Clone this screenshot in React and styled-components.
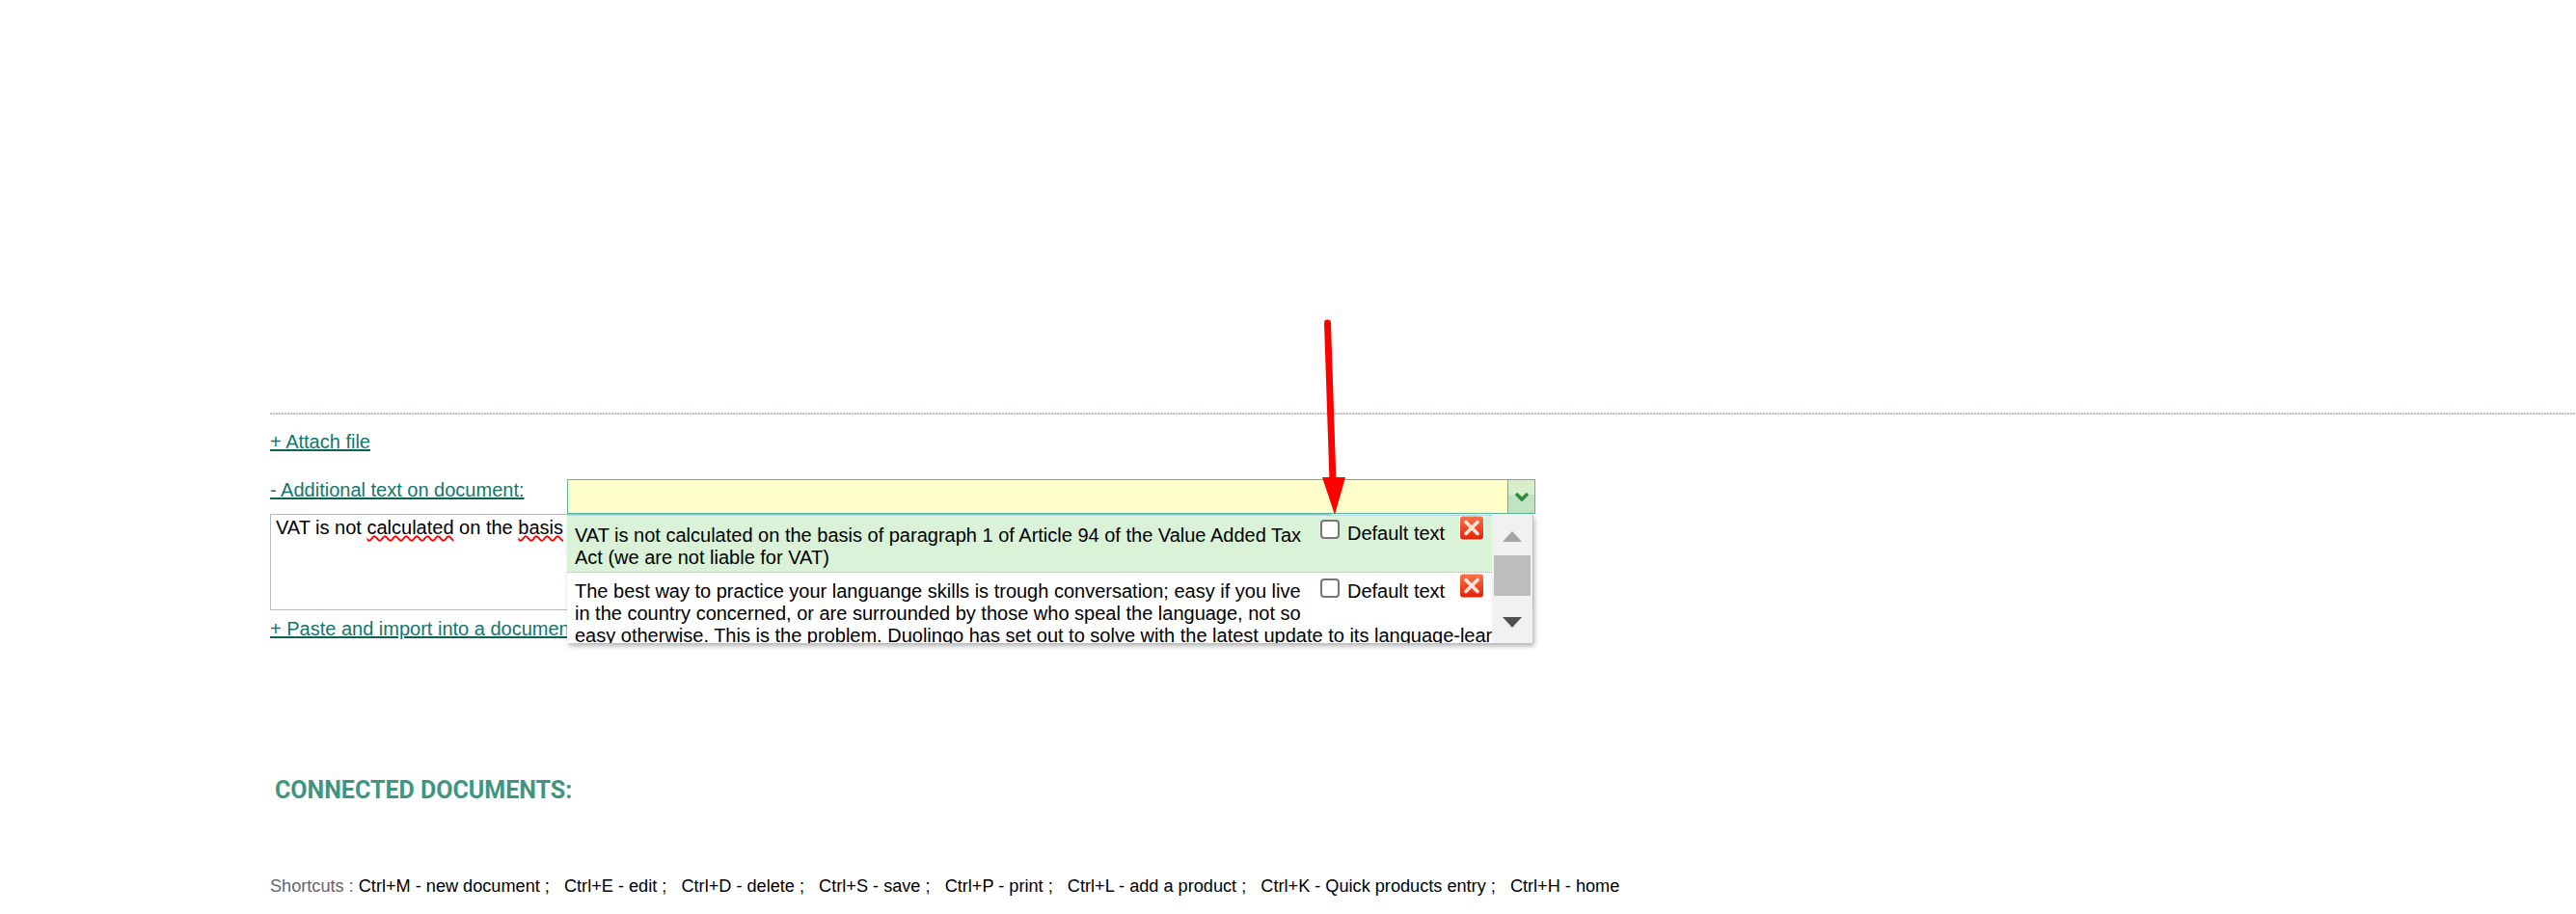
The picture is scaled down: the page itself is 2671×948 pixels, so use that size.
import React from "react";
import styled, { createGlobalStyle } from "styled-components";

const Global = createGlobalStyle`
  html, body { margin: 0; padding: 0; background: #fff; overflow: hidden; }
  body { font-family: "Liberation Sans", Arial, sans-serif; }
`;

const Page = styled.div`
  position: relative;
  width: 2671px;
  height: 948px;
  padding: 428px 0 0 280px;
  box-sizing: border-box;
  overflow: hidden;
`;

const Divider = styled.div`
  height: 2px;
  background: repeating-linear-gradient(90deg, #bcc6bd 0 2px, #eef1ee 2px 3px);
  margin-bottom: 17px;
`;

const TextLink = styled.a`
  display: block;
  width: fit-content;
  font-size: 20px;
  line-height: 23px;
  color: #16756b;
  text-decoration: underline;
  text-decoration-color: #0f5f55;
  text-decoration-thickness: 2px;
  white-space: nowrap;
`;

const AdditionalRow = styled.div`
  display: flex;
  align-items: flex-start;
  margin-top: 27px;
  height: 36px;
`;

const LabelCell = styled.div`
  width: 308px;
`;

const ComboWrap = styled.div`
  display: flex;
  width: 1004px;
  height: 36px;
  box-sizing: border-box;
  border: 1px solid #58b89a;
`;

const ComboInput = styled.div`
  flex: 1;
  background: #ffffcc;
`;

const ComboButton = styled.div`
  width: 27px;
  border-left: 1px solid #58b89a;
  background: linear-gradient(#d9efcb 0 45%, #c0e4c2 45% 100%);
  display: flex;
  align-items: center;
  justify-content: center;
`;

const TextBox = styled.div`
  width: 1100px;
  height: 100px;
  box-sizing: border-box;
  border: 1px solid #b4b8cc;
  padding: 2px 5px;
  font-size: 20px;
  line-height: 23px;
  color: #000;
  white-space: nowrap;
  overflow: hidden;
`;

const Misspelled = styled.span`
  text-decoration: underline wavy #f00 1.5px;
`;

const PasteLink = styled(TextLink)`
  margin-top: 8px;
`;

const Heading = styled.h2`
  margin: 141px 0 0 5px;
  font-family: Roboto, sans-serif;
  font-weight: 700;
  font-size: 25px;
  line-height: 29px;
  color: #3f9580;
`;

const Shortcuts = styled.div`
  margin: 75px 0 0 0;
  font-size: 18.15px;
  line-height: 21px;
  color: #000;
  white-space: pre;
`;

const ShortcutsLabel = styled.span`
  color: #666;
`;

const Dropdown = styled.div`
  position: absolute;
  left: 588px;
  top: 534px;
  width: 1001px;
  height: 133px;
  display: flex;
  background: #fff;
  box-shadow: 2px 3px 5px rgba(0, 0, 0, 0.3);
`;

const Items = styled.div`
  flex: 1;
  min-width: 0;
  overflow: hidden;
`;

const Item = styled.div`
  display: flex;
  box-sizing: border-box;
  height: ${(p) => p.$height}px;
  padding: ${(p) => (p.$active ? 9 : 8)}px 0 0 8px;
  background: ${(p) => (p.$active ? "#d9f2d8" : "#fff")};
  border-top: ${(p) => (p.$active ? "1px dotted #9dbcd0" : "none")};
  border-bottom: ${(p) => (p.$active ? "1px dotted #9dbcd0" : "none")};
`;

const ItemText = styled.div`
  width: 758px;
  flex: none;
  font-size: 20px;
  line-height: 23px;
  color: #000;
  white-space: nowrap;
`;

const DefaultCell = styled.label`
  display: flex;
  align-items: flex-start;
  flex: none;
  font-size: 20px;
  line-height: 23px;
  color: #000;
  margin: ${(p) => (p.$active ? -2 : 0)}px 0 0 15px;
  white-space: nowrap;
`;

const Check = styled.input.attrs({ type: "checkbox" })`
  appearance: none;
  width: 20px;
  height: 20px;
  margin: ${(p) => (p.$active ? -3 : -2)}px 8px 0 0;
  border: 2px solid #767676;
  border-radius: 4px;
  background: #fff;
`;

const Remove = styled.svg`
  width: 26px;
  height: 25px;
  flex: none;
  margin: ${(p) => (p.$active ? -9 : -7)}px 0 0 15px;
`;

const ScrollBar = styled.div`
  position: relative;
  width: 42px;
  flex: none;
  background: #f1f1f1;
  &::after {
    content: "";
    position: absolute;
    right: -1px;
    top: 0;
    width: 1px;
    height: 99px;
    background: #b8bccc;
  }
`;

const Thumb = styled.div`
  position: absolute;
  left: 2px;
  top: 42px;
  width: 38px;
  height: 42px;
  background: #bdbdbd;
`;

const ArrowUp = styled.div`
  position: absolute;
  left: 11px;
  top: 17px;
  border-left: 10px solid transparent;
  border-right: 10px solid transparent;
  border-bottom: 11px solid #a3a3a3;
`;

const ArrowDown = styled.div`
  position: absolute;
  left: 11px;
  top: 106px;
  border-left: 10px solid transparent;
  border-right: 10px solid transparent;
  border-top: 11px solid #505050;
`;

const Annotation = styled.svg`
  position: absolute;
  left: 1360px;
  top: 320px;
  width: 50px;
  height: 220px;
`;

const CloseIcon = ({ active }) => (
  <Remove viewBox="0 0 26 25" $active={active}>
    <defs>
      <linearGradient id="rx" x1="0" y1="0" x2="0" y2="1">
        <stop offset="0" stopColor="#f8734a" />
        <stop offset="1" stopColor="#e42208" />
      </linearGradient>
    </defs>
    <rect x="0" y="0" width="26" height="25" fill="#fff" />
    <rect x="1" y="0.5" width="24" height="24" rx="3" fill="url(#rx)" />
    <path d="M7 6.5 L19 18.5 M19 6.5 L7 18.5" stroke="#ffe4d8" strokeWidth="3.6" strokeLinecap="round" />
  </Remove>
);

export default function App() {
  return (
    <>
      <Global />
      <Page>
        <Divider />
        <TextLink>+ Attach file</TextLink>
        <AdditionalRow>
          <LabelCell>
            <TextLink>- Additional text on document:</TextLink>
          </LabelCell>
          <ComboWrap>
            <ComboInput />
            <ComboButton>
              <svg width="16" height="12" viewBox="0 0 16 12">
                <path d="M2 3 L8 9 L14 3" fill="none" stroke="#2e8b3d" strokeWidth="3.4" />
              </svg>
            </ComboButton>
          </ComboWrap>
        </AdditionalRow>
        <TextBox>
          VAT is not <Misspelled>calculated</Misspelled> on the <Misspelled>basis</Misspelled> of paragraph 1
        </TextBox>
        <PasteLink>+ Paste and import into a document</PasteLink>
        <Heading>CONNECTED DOCUMENTS:</Heading>
        <Shortcuts>
          <ShortcutsLabel>Shortcuts : </ShortcutsLabel>
          {"Ctrl+M - new document ;   Ctrl+E - edit ;   Ctrl+D - delete ;   Ctrl+S - save ;   Ctrl+P - print ;   Ctrl+L - add a product ;   Ctrl+K - Quick products entry ;   Ctrl+H - home"}
        </Shortcuts>

        <Dropdown>
          <Items>
            <Item $active $height={60}>
              <ItemText>
                VAT is not calculated on the basis of paragraph 1 of Article 94 of the Value Added Tax
                <br />
                Act (we are not liable for VAT)
              </ItemText>
              <DefaultCell $active>
                <Check $active />
                Default text
              </DefaultCell>
              <CloseIcon active />
            </Item>
            <Item $height={73}>
              <ItemText>
                The best way to practice your languange skills is trough conversation; easy if you live
                <br />
                in the country concerned, or are surrounded by those who speal the language, not so
                <br />
                easy otherwise. This is the problem. Duolingo has set out to solve with the latest update to its language-learning
              </ItemText>
              <DefaultCell>
                <Check />
                Default text
              </DefaultCell>
              <CloseIcon />
            </Item>
          </Items>
          <ScrollBar>
            <ArrowUp />
            <Thumb />
            <ArrowDown />
          </ScrollBar>
        </Dropdown>

        <Annotation viewBox="0 0 50 220">
          <path d="M16.5 15 L22 180" stroke="#ff0000" strokeWidth="7" strokeLinecap="round" fill="none" />
          <path d="M11 175 L35 175 L24 214 Z" fill="#ff0000" />
        </Annotation>
      </Page>
    </>
  );
}
